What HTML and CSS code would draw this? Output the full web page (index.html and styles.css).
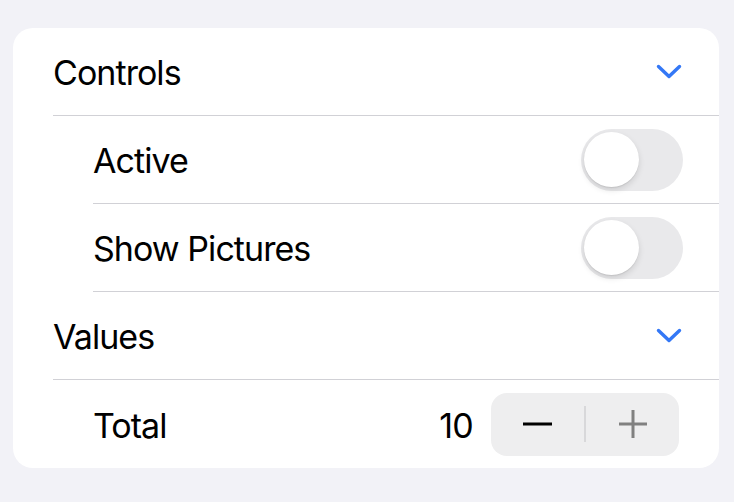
FILE: index.html
```html
<!DOCTYPE html>
<html>
<head>
<meta charset="utf-8">
<link rel="stylesheet" href="styles.css">
</head>
<body>
<div class="page">
  <div class="card">
    <div class="row header">
      <div class="row-inner">
        <span class="label">Controls</span>
        <svg class="chevron" width="26" height="15" viewBox="0 0 26 15"><path d="M2.5 2.5 L13 12.5 L23.5 2.5" fill="none" stroke="#3478f6" stroke-width="3.4" stroke-linecap="round" stroke-linejoin="round"/></svg>
      </div>
    </div>
    <div class="row sub">
      <div class="row-inner">
        <span class="label">Active</span>
        <span class="toggle"><span class="knob"></span></span>
      </div>
    </div>
    <div class="row sub">
      <div class="row-inner">
        <span class="label">Show Pictures</span>
        <span class="toggle"><span class="knob"></span></span>
      </div>
    </div>
    <div class="row header">
      <div class="row-inner">
        <span class="label">Values</span>
        <svg class="chevron" width="26" height="15" viewBox="0 0 26 15"><path d="M2.5 2.5 L13 12.5 L23.5 2.5" fill="none" stroke="#3478f6" stroke-width="3.4" stroke-linecap="round" stroke-linejoin="round"/></svg>
      </div>
    </div>
    <div class="row sub last">
      <div class="row-inner">
        <span class="label">Total</span>
        <span class="value">10</span>
        <span class="stepper">
          <span class="step minus"><svg width="30" height="4" viewBox="0 0 30 4"><rect x="0" y="0.5" width="29" height="3" fill="#000"/></svg></span>
          <span class="step-div"></span>
          <span class="step plus"><svg width="28" height="28" viewBox="0 0 28 28"><rect x="0" y="12.5" width="28" height="3" fill="#808080"/><rect x="12.5" y="0" width="3" height="28" fill="#808080"/></svg></span>
        </span>
      </div>
    </div>
  </div>
</div>
</body>
</html>
```
FILE: styles.css
```css
html, body {
  margin: 0;
  padding: 0;
  background: #f2f2f7;
}
body {
  font-family: Inter, "Noto Sans", sans-serif;
  color: #000;
}
.page {
  padding: 28px 15px 0 13px;
}
.card {
  background: #fff;
  border-radius: 20px;
  overflow: hidden;
}
.row.header {
  padding-left: 40px;
}
.row.sub {
  padding-left: 80px;
}
.row-inner {
  height: 87px;
  border-bottom: 1px solid #d1d1d6;
  display: flex;
  align-items: center;
  padding-right: 36px;
}
.row.last .row-inner {
  border-bottom: none;
  height: 88px;
}
.label {
  font-size: 34px;
  letter-spacing: -0.95px;
  flex: 1;
  padding-top: 2px;
}
.chevron {
  margin-right: 1px;
}
.toggle {
  width: 102px;
  height: 62px;
  border-radius: 31px;
  background: #e9e9eb;
  display: flex;
  align-items: center;
  padding-left: 3px;
  box-sizing: border-box;
}
.knob {
  width: 55px;
  height: 55px;
  border-radius: 50%;
  background: #fff;
  box-shadow: 0 3px 6px rgba(0,0,0,0.12), 0 1px 1px rgba(0,0,0,0.08);
}
.value {
  font-size: 34px;
  letter-spacing: -0.8px;
  margin-right: 18px;
  padding-top: 2px;
}
.stepper {
  width: 188px;
  height: 63px;
  border-radius: 16px;
  background: #eeeeef;
  display: flex;
  align-items: center;
  margin-right: 4px;
}
.step {
  flex: 1;
  display: flex;
  justify-content: center;
  align-items: center;
}
.step svg {
  display: block;
}
.step-div {
  width: 2px;
  height: 36px;
  background: #d8d8da;
}
```
